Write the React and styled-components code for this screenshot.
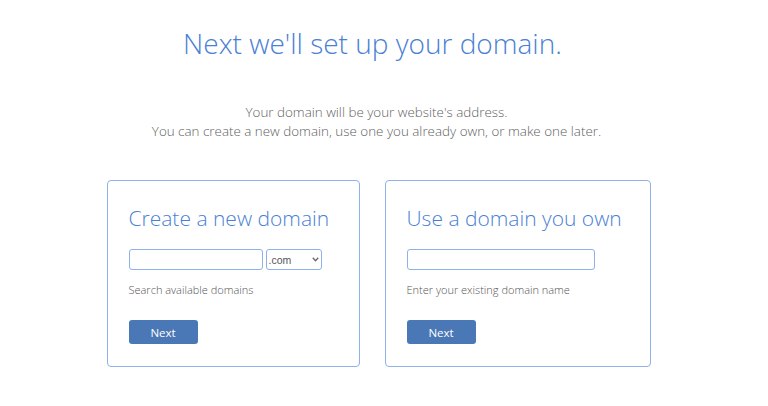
import styled, { createGlobalStyle } from "styled-components";

const GlobalStyle = createGlobalStyle`
  html, body {
    margin: 0;
    padding: 0;
    background: #ffffff;
  }
  body {
    font-family: "Open Sans", "Noto Sans", sans-serif;
  }
`;

const Page = styled.main`
  width: 753px;
  display: flex;
  flex-direction: column;
  align-items: center;
`;

const Title = styled.h1`
  margin: 24px 0 0 -8px;
  font-size: 28px;
  font-weight: 300;
  line-height: 38px;
  color: #4a7fd4;
`;

const Intro = styled.p`
  margin: 41px 0 0;
  font-size: 13.4px;
  font-weight: 300;
  line-height: 19px;
  color: #5f5f5f;
  text-align: center;
`;

const Cards = styled.div`
  display: flex;
  gap: 25px;
  margin: 39px 0 0 4px;
`;

const Card = styled.section`
  box-sizing: border-box;
  width: ${(p) => p.$width}px;
  height: 187px;
  padding: 22px 21px 0;
  border: 1.5px solid #8fb1ea;
  border-radius: 4px;
`;

const CardTitle = styled.h2`
  margin: 0;
  font-size: 21px;
  font-weight: 300;
  color: #4a7fd4;
  line-height: 30px;
  white-space: nowrap;
`;

const Row = styled.div`
  display: flex;
  gap: 3px;
  margin-top: 16px;
`;

const TextInput = styled.input`
  display: block;
  box-sizing: border-box;
  width: ${(p) => p.$width}px;
  height: 21px;
  margin: 0;
  border: 1px solid #8fb1ea;
  border-radius: 3px;
  outline: none;
  background: #fff;
`;

const SelectWrap = styled.div`
  position: relative;
  width: 56px;
  height: 21px;
`;

const Select = styled.select`
  display: block;
  box-sizing: border-box;
  width: 100%;
  height: 100%;
  margin: 0;
  padding: 0 0 0 2px;
  appearance: none;
  border: 1px solid #8fb1ea;
  border-radius: 3px;
  background: #fff;
  font-family: "Liberation Sans", Arial, sans-serif;
  font-size: 10.5px;
  color: #555;
  outline: none;
`;

const Chevron = styled.svg`
  position: absolute;
  right: 3px;
  top: 8px;
  pointer-events: none;
`;

const Help = styled.p`
  margin: 11px 0 0;
  font-size: 11px;
  font-weight: 300;
  line-height: 17px;
  color: #555555;
`;

const Button = styled.button`
  display: block;
  box-sizing: border-box;
  width: 69px;
  height: 24px;
  margin-top: 22px;
  border: none;
  border-radius: 3px;
  background: #4a78b6;
  color: #ffffff;
  font-family: "Open Sans", "Noto Sans", sans-serif;
  font-size: 11.5px;
  cursor: pointer;
`;

export default function App() {
  return (
    <>
      <GlobalStyle />
      <Page>
        <Title>Next we'll set up your domain.</Title>
        <Intro>
          Your domain will be your website's address.
          <br />
          You can create a new domain, use one you already own, or make one later.
        </Intro>
        <Cards>
          <Card $width={253}>
            <CardTitle>Create a new domain</CardTitle>
            <Row>
              <TextInput type="text" $width={134} />
              <SelectWrap>
                <Select defaultValue=".com">
                  <option>.com</option>
                  <option>.net</option>
                  <option>.org</option>
                </Select>
                <Chevron width="7" height="5" viewBox="0 0 7 5">
                  <path d="M0.8 0.8 L3.5 3.7 L6.2 0.8" fill="none" stroke="#666" strokeWidth="1.3" />
                </Chevron>
              </SelectWrap>
            </Row>
            <Help>Search available domains</Help>
            <Button>Next</Button>
          </Card>
          <Card $width={266}>
            <CardTitle>Use a domain you own</CardTitle>
            <Row>
              <TextInput type="text" $width={188} />
            </Row>
            <Help>Enter your existing domain name</Help>
            <Button>Next</Button>
          </Card>
        </Cards>
      </Page>
    </>
  );
}
